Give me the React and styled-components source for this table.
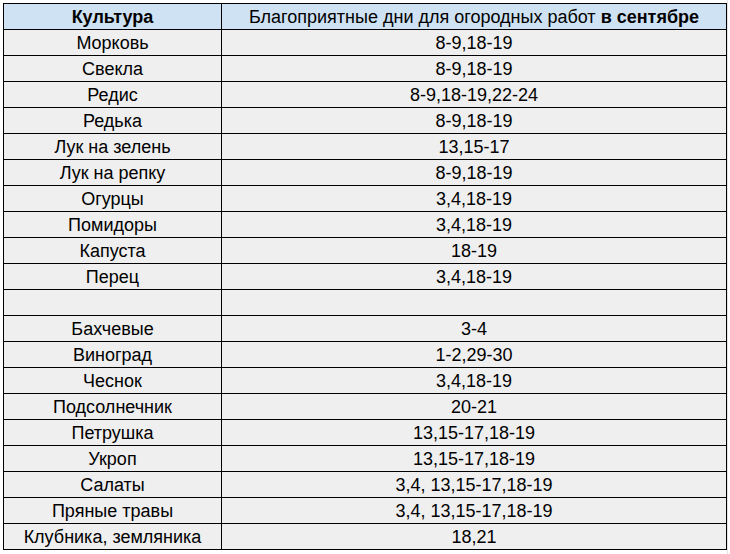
import React from 'react';
import styled, { createGlobalStyle } from 'styled-components';

const GlobalStyle = createGlobalStyle`
  html, body {
    margin: 0;
    padding: 0;
    background: #ffffff;
  }
  body {
    font-family: "Liberation Sans", Arial, sans-serif;
  }
`;

const Sheet = styled.div`
  width: 728px;
  height: 554px;
  padding: 3px 0 0 3px;
  box-sizing: border-box;
  border-right: 1px solid #e3e3e3;
  overflow: hidden;
`;

const Table = styled.table`
  border-collapse: collapse;
  table-layout: fixed;
  width: 723px;
  font-size: 18px;
  color: #000;
`;

const HeadCell = styled.th`
  height: 23px;
  padding: 2px 2px 0;
  border: 1px solid #000;
  background: #cfe2f3;
  font-weight: ${(p) => (p.$bold ? 700 : 400)};
  text-align: center;
  vertical-align: top;
  line-height: 23px;
  white-space: nowrap;
  overflow: hidden;
`;

const Cell = styled.td`
  height: 23px;
  padding: 2px 2px 0;
  border: 1px solid #000;
  background: #efefef;
  text-align: center;
  vertical-align: top;
  line-height: 23px;
  white-space: nowrap;
  overflow: hidden;
`;

const rows = [
  ['Морковь', '8-9,18-19'],
  ['Свекла', '8-9,18-19'],
  ['Редис', '8-9,18-19,22-24'],
  ['Редька', '8-9,18-19'],
  ['Лук на зелень', '13,15-17'],
  ['Лук на репку', '8-9,18-19'],
  ['Огурцы', '3,4,18-19'],
  ['Помидоры', '3,4,18-19'],
  ['Капуста', '18-19'],
  ['Перец', '3,4,18-19'],
  ['', ''],
  ['Бахчевые', '3-4'],
  ['Виноград', '1-2,29-30'],
  ['Чеснок', '3,4,18-19'],
  ['Подсолнечник', '20-21'],
  ['Петрушка', '13,15-17,18-19'],
  ['Укроп', '13,15-17,18-19'],
  ['Салаты', '3,4, 13,15-17,18-19'],
  ['Пряные травы', '3,4, 13,15-17,18-19'],
  ['Клубника, земляника', '18,21'],
];

export default function App() {
  return (
    <>
      <GlobalStyle />
      <Sheet>
        <Table>
          <colgroup>
            <col style={{ width: 218 }} />
            <col style={{ width: 505 }} />
          </colgroup>
          <thead>
            <tr>
              <HeadCell $bold>Культура</HeadCell>
              <HeadCell>
                Благоприятные дни для огородных работ <b>в сентябре</b>
              </HeadCell>
            </tr>
          </thead>
          <tbody>
            {rows.map(([crop, days], i) => (
              <tr key={i}>
                <Cell>{crop}</Cell>
                <Cell>{days}</Cell>
              </tr>
            ))}
          </tbody>
        </Table>
      </Sheet>
    </>
  );
}
